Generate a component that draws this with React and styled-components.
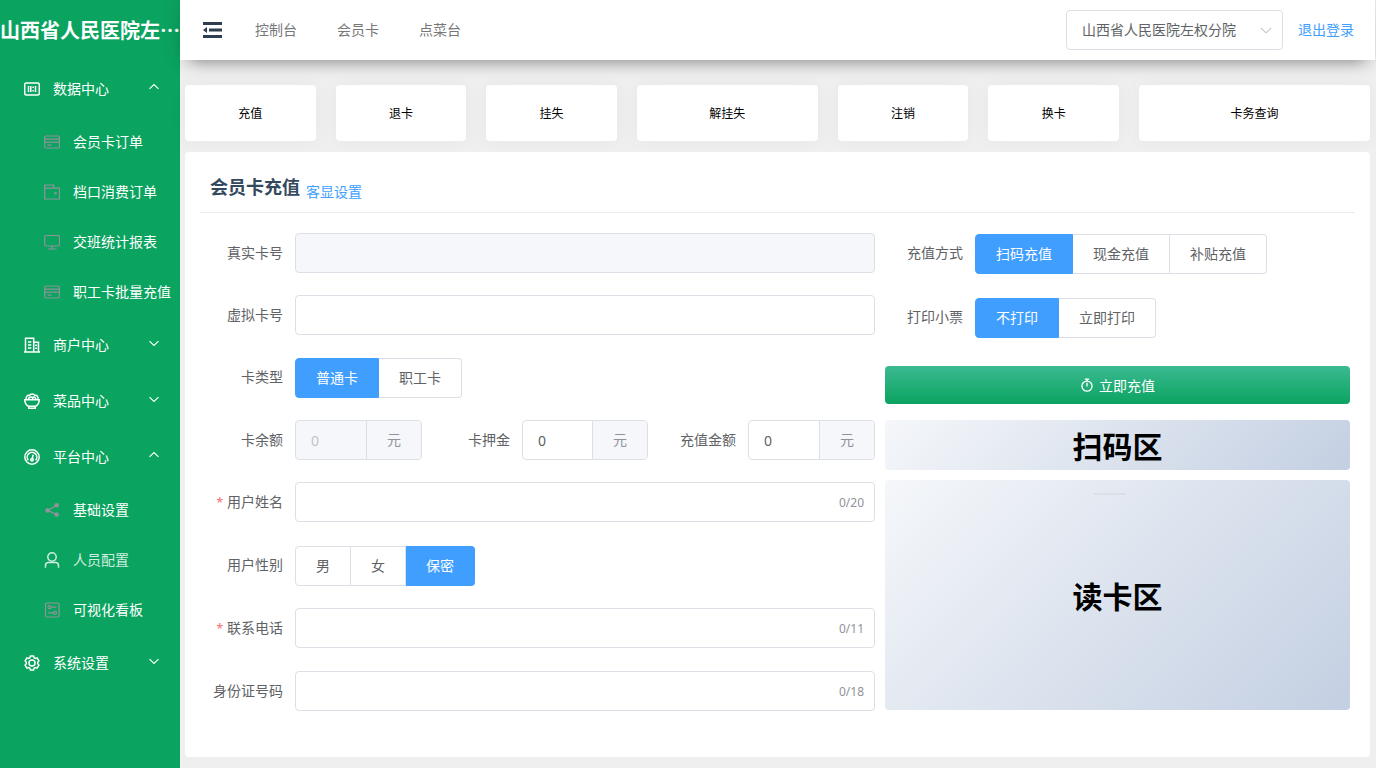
import React, { useState } from 'react';
import styled, { createGlobalStyle, css } from 'styled-components';

const GlobalStyle = createGlobalStyle`
	* {
		box-sizing: border-box;
	}
	body {
		margin: 0;
		background: #efefef;
		color: #606266;
		font-family: 'Noto Sans', 'Noto Sans CJK SC', sans-serif;
		font-size: 14px;
	}
	button,
	input,
	select {
		font-family: inherit;
		font-size: inherit;
	}
	a {
		color: inherit;
		text-decoration: none;
	}
	h1, h2, ul {
		margin: 0;
		padding: 0;
	}
	ul {
		list-style: none;
	}
`;

const Layout = styled.div`
	display: flex;
	min-height: 100vh;
`;

const Sidebar = styled.aside`
	flex: none;
	width: 180px;
	background: #0ba360;
	color: #fff;
`;

const Logo = styled.h1`
	height: 60px;
	margin-bottom: 1px;
	line-height: 60px;
	font-family: 'STXingkai', 'KaiTi', 'Noto Sans CJK SC', sans-serif;
	font-size: 20px;
	font-weight: 700;
	overflow: hidden;
	white-space: nowrap;
	text-overflow: ellipsis;
`;

const MenuTitle = styled.button`
	display: flex;
	align-items: center;
	width: 100%;
	height: 56px;
	padding: 0 20px 0 24px;
	border: 0;
	background: none;
	color: #fff;
	cursor: pointer;

	span {
		flex: 1;
		margin-left: 13px;
		padding-bottom: 2px;
		text-align: left;
	}
	svg:last-child {
		margin-bottom: 4px;
	}
`;

const MenuLink = styled.a`
	display: flex;
	align-items: center;
	height: 50px;
	padding-left: 44px;
	white-space: nowrap;
	opacity: ${({ $active }) => ($active ? 0.8 : 1)};

	svg {
		color: ${({ $active }) => ($active ? '#fff' : '#909399')};
	}

	span {
		margin-left: 13px;
		padding-bottom: 2px;
	}
`;

const Page = styled.div`
	flex: 1;
	display: flex;
	flex-direction: column;
	min-width: 0;
`;

const Header = styled.header`
	display: flex;
	align-items: center;
	height: 60px;
	margin-right: 1px;
	padding: 0 21px 0 22px;
	background: #fff;
	box-shadow: 0 0 20px rgba(0, 0, 0, 0.12), 0 12px 16px -11px rgba(0, 0, 0, 0.4);
`;

const FoldButton = styled.button`
	display: flex;
	padding: 0;
	border: 0;
	background: none;
	color: #2c3e50;
	cursor: pointer;
`;

const Nav = styled.nav`
	flex: 1;
	display: flex;
	gap: 40px;
	margin-left: 32px;
	padding-bottom: 2px;
	color: #777;
`;

const SelectBox = styled.div`
	position: relative;
	width: 217px;

	svg {
		position: absolute;
		top: 13px;
		right: 10px;
		color: #c0c4cc;
		pointer-events: none;
	}
`;

const Select = styled.select`
	display: block;
	width: 100%;
	height: 40px;
	padding: 0 30px 2px 15px;
	border: 1px solid #dcdfe6;
	border-radius: 4px;
	background: #fff;
	color: #606266;
	appearance: none;
`;

const TextLink = styled.a`
	color: #409eff;
`;

const Logout = styled(TextLink)`
	margin-left: 15px;
	padding-bottom: 2px;
`;

const Main = styled.main`
	flex: 1;
	display: flex;
	flex-direction: column;
	gap: 11px;
	padding: 25px 6px 11px 5px;
`;

const Tabs = styled.div`
	display: grid;
	grid-template-columns: repeat(24, minmax(0, 1fr));
	column-gap: 20px;
`;

const Tab = styled.button`
	grid-column: span ${({ $span }) => $span};
	height: 56px;
	border: 0;
	border-radius: 4px;
	background: #fff;
	box-shadow: 0 0 20px rgba(0, 0, 0, 0.04);
	color: #000;
	font-size: 12px;
	cursor: pointer;
`;

const Panel = styled.section`
	flex: 1;
	padding: 15px;
	border-radius: 4px;
	background: #fff;
`;

const PanelHead = styled.div`
	display: flex;
	align-items: flex-end;
	gap: 6px;
	height: 46px;
	padding: 0 10px 10px;
	border-bottom: 1px solid #ebebeb;
	line-height: 20px;
`;

const Title = styled.h2`
	color: #34495e;
	font-size: 18px;
	line-height: 30px;
`;

const Form = styled.form`
	display: flex;
	gap: 10px;
	padding: 20px 5px 0 0;
`;

const Fields = styled.div`
	flex: 675;
	display: flex;
	flex-direction: column;
	gap: 22px;
`;

const Aside = styled.div`
	flex: 465;
	display: flex;
	flex-direction: column;
	gap: 10px;
`;

const AsideFields = styled.div`
	display: flex;
	flex-direction: column;
	gap: 23px;
	margin-bottom: 18px;
`;

const Item = styled.div`
	flex: 1;
	display: flex;
	min-width: 0;
`;

const labelStyle = css`
	flex: none;
	width: ${({ $width }) => $width || 95}px;
	padding-right: 12px;
	line-height: 40px;
	text-align: right;
	white-space: nowrap;

	&::before {
		content: ${({ $required }) => ($required ? "'*'" : 'none')};
		margin-right: 4px;
		color: #f56c6c;
		font-size: 12px;
	}
`;

const Label = styled.label`
	${labelStyle}
`;

const GroupLabel = styled.span`
	${labelStyle}
`;

const Row = styled.div`
	display: grid;
	grid-template-columns: 222fr 226fr 227fr;
`;

const InputBox = styled.div`
	flex: 1;
	display: flex;
	align-items: center;
	min-width: 0;
	height: 40px;
	border: 1px solid #dcdfe6;
	border-radius: 4px;
	background: ${({ $disabled }) => ($disabled ? '#f5f7fa' : '#fff')};
	overflow: hidden;
`;

const Input = styled.input`
	flex: 1;
	min-width: 0;
	height: 100%;
	padding: 0 15px;
	border: 0;
	outline: 0;
	background: none;
	color: #606266;

	&:disabled {
		color: #c0c4cc;
	}
`;

const Count = styled.span`
	padding-right: 10px;
	color: #909399;
	font-size: 12px;
`;

const Unit = styled.span`
	flex: none;
	width: 55px;
	border-left: 1px solid #dcdfe6;
	background: #f5f7fa;
	color: #909399;
	line-height: 38px;
	text-align: center;
`;

const Radios = styled.div`
	display: flex;
	margin-top: 1px;
`;

const Radio = styled.label`
	display: block;
	height: 40px;
	padding: 0 20px;
	border: 1px solid #dcdfe6;
	border-left-width: 0;
	line-height: 38px;
	cursor: pointer;

	&:first-child {
		border-left-width: 1px;
		border-radius: 4px 0 0 4px;
	}
	&:last-child {
		border-radius: 0 4px 4px 0;
	}
	&:has(input:checked) {
		border-color: #409eff;
		background: #409eff;
		color: #fff;
	}
	&:has(input:focus-visible) {
		box-shadow: 0 0 2px 2px #409eff;
	}

	input {
		position: absolute;
		opacity: 0;
		pointer-events: none;
	}
`;

const Submit = styled.button`
	display: flex;
	align-items: center;
	justify-content: center;
	gap: 5px;
	height: 38px;
	margin-bottom: 6px;
	border: 0;
	border-radius: 4px;
	background: linear-gradient(0deg, #0ba360 0%, #3cba92 100%);
	color: #fff;
	cursor: pointer;
`;

const Zone = styled.div`
	position: relative;
	display: flex;
	align-items: center;
	justify-content: center;
	height: ${({ $height }) => $height}px;
	border-radius: 4px;
	background: linear-gradient(135deg, #f5f7fa 0%, #c3cfe2 100%);
	color: #000;
	font-size: 30px;
	font-weight: 700;

	&::before {
		content: '';
		position: absolute;
		top: 13px;
		left: 50%;
		width: 32px;
		height: 2px;
		margin-left: -24px;
		background: #dcdfe6;
	}
	span {
		position: relative;
	}
`;

const icons = {
	data: (
		<>
			<rect x='.7' y='2' width='14.6' height='12' rx='1.5' />
			<path d='M4.5 5v6M11.5 5v6M6.8 5v6M9.1 5.4V7M9.1 9v1.6' />
		</>
	),
	card: (
		<>
			<rect x='.7' y='2' width='14.8' height='12' rx='1.5' />
			<path d='M1 5.2h14.5M1 8.2h14.5M3.5 11.2h4' />
		</>
	),
	wallet: (
		<>
			<path d='M.7 15V1h9v3.2M.7 4.2h14.8V15H.7z' />
			<circle cx='11.5' cy='9.2' r='.7' fill='currentColor' />
		</>
	),
	screen: (
		<>
			<rect x='.7' y='1.5' width='14.8' height='10.5' rx='1.5' />
			<path d='M8.2 12v3M4 15h8.5' />
		</>
	),
	shop: (
		<>
			<path d='M1.5 15V1.2h8.2V15M9.7 5.2h4.8V15M0 15h16' />
			<path d='M4 5h3.3M4 8h3.3M4 11h3.3M11.2 8.2h2M11.2 11.2h2' />
		</>
	),
	food: (
		<>
			<path d='M.8 6.8h14.4c0 3.2-1.6 5.6-4 6.7v1.7H4.8v-1.7c-2.4-1.1-4-3.5-4-6.7zM4.8 13.3h6.4' />
			<path d='M2.2 6.6C1.6 4 3.4 1.8 5.6 2.4c1-1.9 4.2-1.9 5.2 0 2.4-.4 3.8 1.8 3 4.2M4.6 6.6c0-3.4 4.4-3.4 4.4 0M8.2 4.6c1.4-1.4 3.6-.4 3.6 2' />
		</>
	),
	gauge: (
		<>
			<circle cx='8' cy='8' r='7.2' />
			<path d='M4.3 11.2A4.8 4.8 0 1 1 11.7 11.2M9.2 5.6 8.2 10' />
			<circle cx='8' cy='10.8' r='1.2' />
		</>
	),
	share: (
		<>
			<path d='M3.8 8.4 12.6 3.4M3.8 8.4l8.8 4.2' />
			<circle cx='3.6' cy='8.4' r='1.7' fill='currentColor' />
			<circle cx='12.6' cy='3.2' r='1.7' fill='currentColor' />
			<circle cx='12.6' cy='12.6' r='1.7' fill='currentColor' />
		</>
	),
	user: (
		<>
			<circle cx='8' cy='5' r='4.2' />
			<path d='M1.5 15.8v-2.4c0-1.7 1-2.8 2.8-2.8h7.4c1.8 0 2.8 1.1 2.8 2.8v2.4' />
		</>
	),
	board: (
		<>
			<rect x='1.5' y='1' width='13.6' height='14' rx='1.5' />
			<circle cx='5.6' cy='5.2' r='1.5' />
			<circle cx='11' cy='10.8' r='1.5' />
			<path d='M7.3 5.2h5M4.2 10.8h5.2' />
		</>
	),
	gear: (
		<>
			<circle cx='8' cy='8' r='3' />
			<path d='M6.4 1h3.2l.5 1.7 1.3.7 1.7-.5 1.8 3-1.2 1.3v1.6l1.2 1.3-1.8 3-1.7-.5-1.3.7-.5 1.7H6.4l-.5-1.7-1.3-.7-1.7.5-1.8-3 1.2-1.3V7.2L1.1 5.9l1.8-3 1.7.5 1.3-.7z' />
		</>
	),
	timer: (
		<>
			<circle cx='8' cy='9.3' r='5.8' />
			<path d='M8 5.5v4.3M8 3.5V1.3M5.5 1.3h5' />
		</>
	),
	down: <path d='M2 5.5 8 11.2l6-5.7' />,
	up: <path d='M2 10.5 8 4.800l6 5.700' />,
};

const Icon = ({ name, size = 16, stroke = 1.2 }) => (
	<svg
		width={size}
		height={size}
		viewBox='0 0 16 16'
		fill='none'
		stroke='currentColor'
		strokeWidth={stroke}
		aria-hidden='true'>
		{icons[name]}
	</svg>
);

const menu = [
	{
		title: '数据中心',
		icon: 'data',
		open: true,
		children: [
			{ title: '会员卡订单', icon: 'card' },
			{ title: '档口消费订单', icon: 'wallet' },
			{ title: '交班统计报表', icon: 'screen' },
			{ title: '职工卡批量充值', icon: 'card' },
		],
	},
	{ title: '商户中心', icon: 'shop', children: [] },
	{ title: '菜品中心', icon: 'food', children: [] },
	{
		title: '平台中心',
		icon: 'gauge',
		open: true,
		children: [
			{ title: '基础设置', icon: 'share' },
			{ title: '人员配置', icon: 'user', active: true },
			{ title: '可视化看板', icon: 'board' },
		],
	},
	{ title: '系统设置', icon: 'gear', children: [] },
];

const tabs = [
	{ title: '充值', span: 3 },
	{ title: '退卡', span: 3 },
	{ title: '挂失', span: 3 },
	{ title: '解挂失', span: 4 },
	{ title: '注销', span: 3 },
	{ title: '换卡', span: 3 },
	{ title: '卡务查询', span: 5 },
];

const SubMenu = ({ item }) => {
	const [open, setOpen] = useState(!!item.open);

	return (
		<li>
			<MenuTitle aria-expanded={open} onClick={() => setOpen(!open)}>
				<Icon name={item.icon} stroke={1.5} />
				<span>{item.title}</span>
				<Icon name={open ? 'up' : 'down'} size={12} stroke={1.5} />
			</MenuTitle>
			{open && (
				<ul>
					{item.children.map((child) => (
						<li key={child.title}>
							<MenuLink href='#' $active={child.active}>
								<Icon name={child.icon} stroke={child.active ? 1.5 : 1.2} />
								<span>{child.title}</span>
							</MenuLink>
						</li>
					))}
				</ul>
			)}
		</li>
	);
};

const TextField = ({ id, label, required, disabled, max }) => {
	const [value, setValue] = useState('');

	return (
		<Item>
			<Label htmlFor={id} $required={required}>
				{label}
			</Label>
			<InputBox $disabled={disabled}>
				<Input
					id={id}
					value={value}
					maxLength={max}
					disabled={disabled}
					onChange={(e) => setValue(e.target.value)}
				/>
				{max && (
					<Count>
						{value.length}/{max}
					</Count>
				)}
			</InputBox>
		</Item>
	);
};

const MoneyField = ({ id, label, disabled, width }) => (
	<Item>
		<Label htmlFor={id} $width={width}>
			{label}
		</Label>
		<InputBox $disabled={disabled}>
			<Input id={id} defaultValue='0' disabled={disabled} />
			<Unit>元</Unit>
		</InputBox>
	</Item>
);

const RadioField = ({ name, label, options, selected, width }) => (
	<Item role='radiogroup' aria-labelledby={`${name}-label`}>
		<GroupLabel id={`${name}-label`} $width={width}>
			{label}
		</GroupLabel>
		<Radios>
			{options.map((option) => (
				<Radio key={option}>
					<input
						type='radio'
						name={name}
						value={option}
						defaultChecked={option === selected}
					/>
					{option}
				</Radio>
			))}
		</Radios>
	</Item>
);

const App = () => (
	<>
		<GlobalStyle />
		<Layout>
			<Sidebar>
				<Logo>山西省人民医院左权分院</Logo>
				<ul>
					{menu.map((item) => (
						<SubMenu key={item.title} item={item} />
					))}
				</ul>
			</Sidebar>
			<Page>
				<Header>
					<FoldButton aria-label='收起菜单'>
						<svg width='21' height='18' viewBox='0 0 21 18' fill='currentColor'>
							<path d='M1 1h19v3H1zM7 7.5h13v3H7zM1 14h19v3H1zM1 9l4-3v6z' />
						</svg>
					</FoldButton>
					<Nav>
						<a href='#'>控制台</a>
						<a href='#'>会员卡</a>
						<a href='#'>点菜台</a>
					</Nav>
					<SelectBox>
						<Select aria-label='医院'>
							<option>山西省人民医院左权分院</option>
						</Select>
						<Icon name='down' size={14} />
					</SelectBox>
					<Logout href='#'>退出登录</Logout>
				</Header>
				<Main>
					<Tabs>
						{tabs.map((tab) => (
							<Tab key={tab.title} $span={tab.span}>
								{tab.title}
							</Tab>
						))}
					</Tabs>
					<Panel>
						<PanelHead>
							<Title>会员卡充值</Title>
							<TextLink href='#'>客显设置</TextLink>
						</PanelHead>
						<Form onSubmit={(e) => e.preventDefault()}>
							<Fields>
								<TextField id='realNo' label='真实卡号' disabled />
								<TextField id='virtualNo' label='虚拟卡号' />
								<RadioField
									name='cardType'
									label='卡类型'
									options={['普通卡', '职工卡']}
									selected='普通卡'
								/>
								<Row>
									<MoneyField id='balance' label='卡余额' disabled />
									<MoneyField id='deposit' label='卡押金' width={100} />
									<MoneyField id='amount' label='充值金额' width={100} />
								</Row>
								<TextField id='name' label='用户姓名' required max={20} />
								<RadioField
									name='gender'
									label='用户性别'
									options={['男', '女', '保密']}
									selected='保密'
								/>
								<TextField id='phone' label='联系电话' required max={11} />
								<TextField id='idCard' label='身份证号码' max={18} />
							</Fields>
							<Aside>
								<AsideFields>
									<RadioField
										name='payType'
										label='充值方式'
										options={['扫码充值', '现金充值', '补贴充值']}
										selected='扫码充值'
										width={90}
									/>
									<RadioField
										name='print'
										label='打印小票'
										options={['不打印', '立即打印']}
										selected='不打印'
										width={90}
									/>
								</AsideFields>
								<Submit>
									<Icon name='timer' size={14} stroke={1.5} />
									立即充值
								</Submit>
								<Zone $height={50}>
									<span>扫码区</span>
								</Zone>
								<Zone $height={230}>
									<span>读卡区</span>
								</Zone>
							</Aside>
						</Form>
					</Panel>
				</Main>
			</Page>
		</Layout>
	</>
);

export default App;
